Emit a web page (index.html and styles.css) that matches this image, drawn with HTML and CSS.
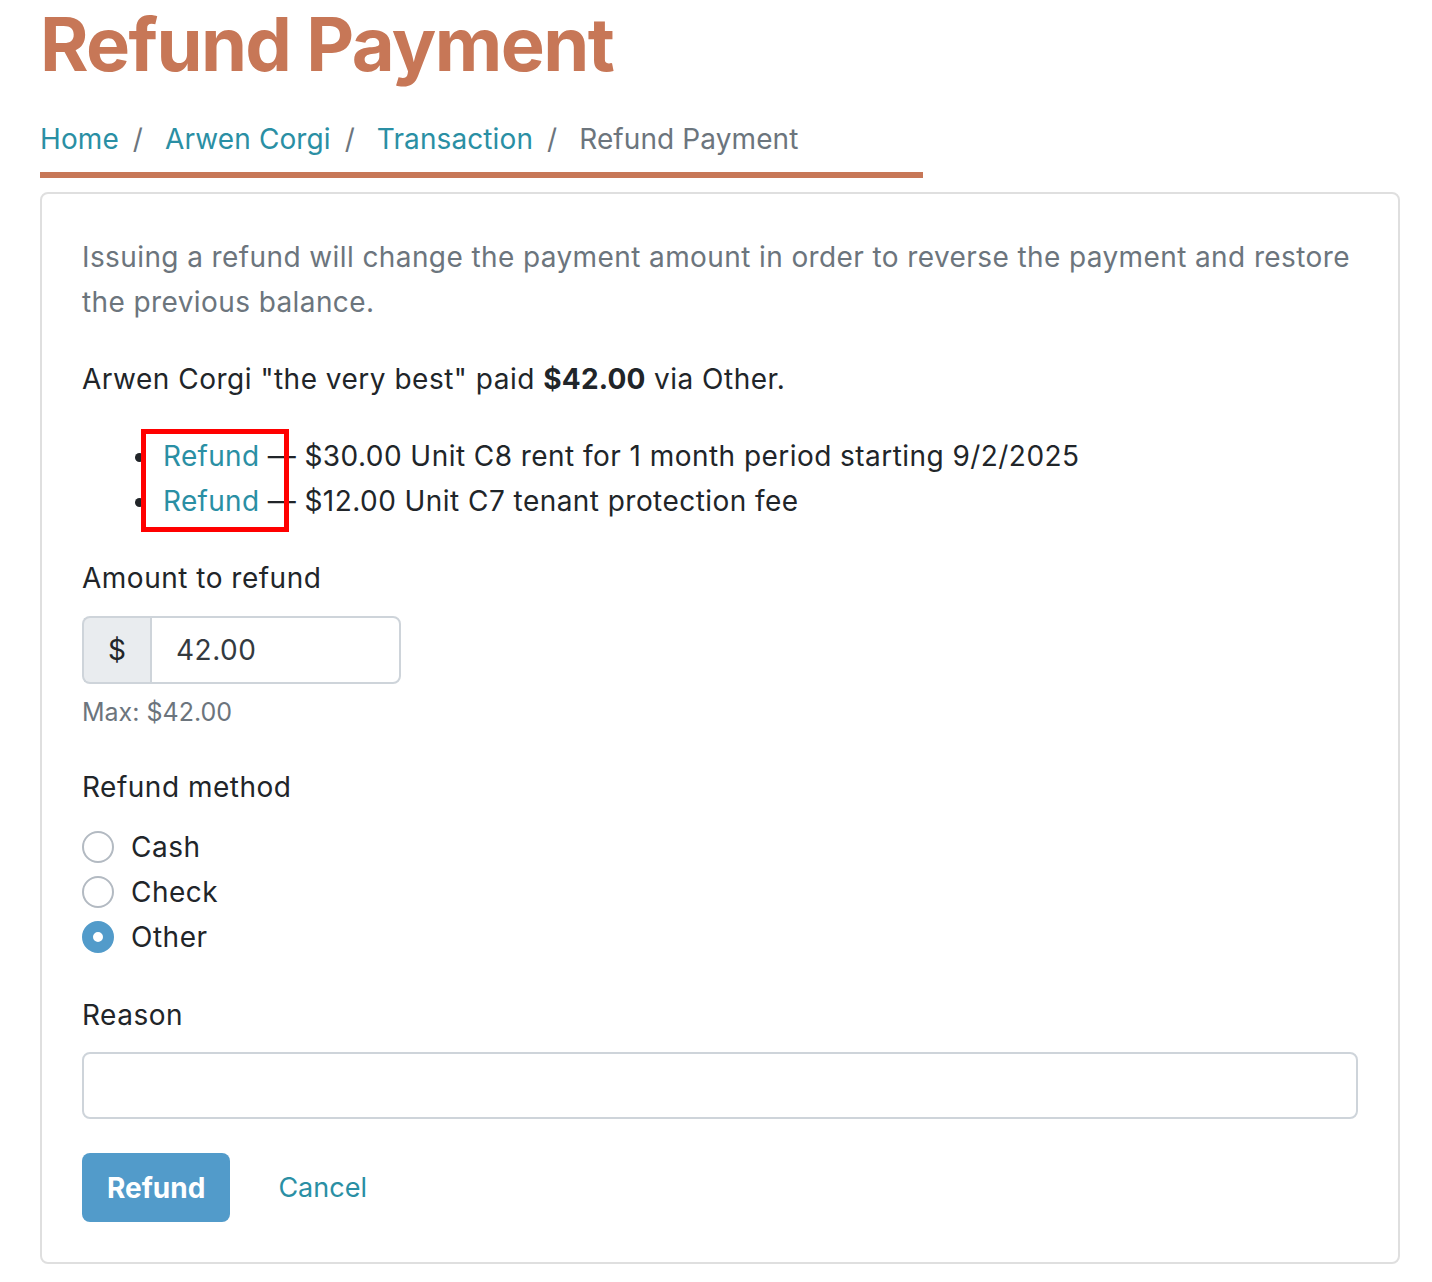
FILE: index.html
```html
<!DOCTYPE html>
<html lang="en">
<head>
<meta charset="utf-8">
<title>Refund Payment</title>
<link rel="stylesheet" href="styles.css">
</head>
<body>
<div class="page">
  <h1 class="title">Refund Payment</h1>
  <nav class="crumbs">
    <a href="#">Home</a><span class="sep">/</span>
    <a href="#">Arwen Corgi</a><span class="sep">/</span>
    <a href="#">Transaction</a><span class="sep">/</span>
    <span class="current">Refund Payment</span>
  </nav>
  <div class="card">
    <p class="intro">Issuing a refund will change the payment amount in order to reverse the payment and restore the previous balance.</p>
    <p class="summary">Arwen Corgi "the very best" paid <strong>$42.00</strong> via Other.</p>
    <ul class="items">
      <li><a href="#">Refund</a> — $30.00 Unit C8 rent for 1 month period starting 9/2/2025</li>
      <li><a href="#">Refund</a> — $12.00 Unit C7 tenant protection fee</li>
      <span class="highlight"></span>
    </ul>
    <div class="field amount">
      <label class="label" for="amt">Amount to refund</label>
      <div class="input-group">
        <span class="addon">$</span>
        <input id="amt" class="input" type="text" value="42.00">
      </div>
      <div class="help">Max: $42.00</div>
    </div>
    <div class="field method">
      <div class="label">Refund method</div>
      <label class="radio"><input type="radio" name="m"><span>Cash</span></label>
      <label class="radio"><input type="radio" name="m"><span>Check</span></label>
      <label class="radio"><input type="radio" name="m" checked><span>Other</span></label>
    </div>
    <div class="field reason">
      <label class="label" for="reason">Reason</label>
      <input id="reason" class="input wide" type="text">
    </div>
    <div class="actions">
      <button class="btn" type="button">Refund</button>
      <a href="#" class="cancel">Cancel</a>
    </div>
  </div>
</div>
</body>
</html>
```
FILE: styles.css
```css
html, body {
  margin: 0;
  padding: 0;
  background: #ffffff;
}
body {
  font-family: Inter, "Noto Sans", sans-serif;
  color: #212529;
}
.page {
  width: 1360px;
  padding-left: 40px;
}
.title {
  margin: 0;
  font-family: Inter, sans-serif;
  font-weight: 700;
  font-size: 74px;
  line-height: 88px;
  color: #c77757;
  letter-spacing: -1.6px;
}
.crumbs {
  width: 883px;
  margin-top: 29px;
  padding-bottom: 10px;
  border-bottom: 6px solid #c77757;
  font-size: 28px;
  line-height: 45px;
  letter-spacing: 0.1px;
  color: #6c757d;
}
.crumbs a {
  color: #2a8fa4;
  text-decoration: none;
}
.crumbs .sep {
  display: inline-block;
  margin: 0 14px;
  color: #6c757d;
}
.card {
  margin-top: 14px;
  border: 2px solid #dfdfdf;
  border-radius: 8px;
  padding: 40px;
}
.intro,
.summary,
.items {
  font-size: 28px;
  line-height: 45px;
  letter-spacing: 0.5px;
}
.intro {
  margin: 1px 0 32px;
  letter-spacing: 0.4px;
  color: #6c757d;
}
.summary {
  margin: 0 0 32px;
}
.summary strong {
  font-weight: 700;
  letter-spacing: 0.2px;
}
.items {
  position: relative;
  margin: 0 0 32px;
  padding-left: 81px;
  list-style: none;
  letter-spacing: 0.45px;
}
.items li::before {
  content: "";
  display: inline-block;
  width: 9px;
  height: 9px;
  margin-left: -28px;
  margin-right: 19px;
  border-radius: 50%;
  background: #212529;
  vertical-align: 4px;
}
.items a {
  color: #2a8fa4;
  text-decoration: none;
  letter-spacing: 0.3px;
}
.highlight {
  position: absolute;
  left: 59px;
  top: -5px;
  width: 138px;
  height: 93px;
  border: 5px solid #ff0000;
}
.label {
  display: block;
  font-size: 28px;
  line-height: 45px;
  letter-spacing: 0.5px;
  margin-bottom: 15px;
}
.input-group {
  display: flex;
  width: 319px;
  height: 68px;
}
.addon {
  display: flex;
  align-items: center;
  justify-content: center;
  width: 66px;
  border: 2px solid #ced4da;
  border-right: none;
  border-radius: 8px 0 0 8px;
  background: #e9ecef;
  font-size: 28px;
  color: #212529;
}
.input {
  box-sizing: border-box;
  border: 2px solid #ced4da;
  font-family: Inter, sans-serif;
  font-size: 28px;
  letter-spacing: 0.5px;
  color: #343a40;
  outline: none;
  background: #fff;
}
.input-group .input {
  flex: 1;
  min-width: 0;
  height: 68px;
  padding: 0 24px;
  border-radius: 0 8px 8px 0;
}
.help {
  margin-top: 10px;
  font-size: 25px;
  line-height: 37px;
  color: #6c757d;
}
.method {
  margin-top: 34px;
}
.method .label {
  margin-bottom: 14px;
}
.radio {
  display: flex;
  align-items: center;
  height: 45px;
  font-size: 28px;
  letter-spacing: 0.5px;
}
.radio input {
  appearance: none;
  -webkit-appearance: none;
  box-sizing: border-box;
  width: 32px;
  height: 32px;
  margin: 0 17px 0 0;
  border: 2px solid #b3bac2;
  border-radius: 50%;
  background: #fff;
}
.radio input:checked {
  border: 11px solid #529bca;
  background: #fff;
}
.reason {
  margin-top: 34px;
}
.reason .label {
  margin-bottom: 14px;
}
.input.wide {
  display: block;
  width: 100%;
  height: 67px;
  border-radius: 8px;
}
.actions {
  display: flex;
  align-items: center;
  margin-top: 34px;
}
.btn {
  height: 69px;
  padding: 0 25px;
  border: none;
  border-radius: 8px;
  background: #529bca;
  color: #fff;
  font-family: Inter, sans-serif;
  font-weight: 700;
  font-size: 28px;
}
.cancel {
  margin-left: 48px;
  font-size: 27px;
  color: #2a8fa4;
  text-decoration: none;
}
```
